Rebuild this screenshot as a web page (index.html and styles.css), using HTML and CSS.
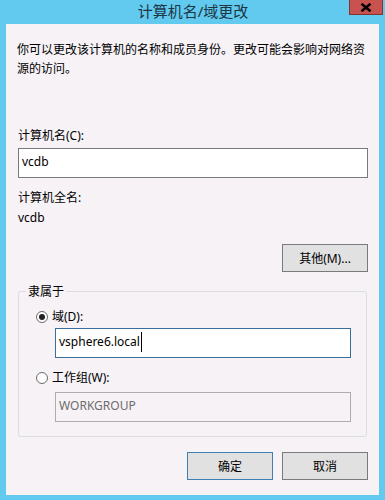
FILE: index.html
```html
<!DOCTYPE html>
<html>
<head>
<meta charset="utf-8">
<link rel="stylesheet" href="styles.css">
</head>
<body>
<div class="window">
  <div class="titlebar">
    <div class="title">计算机名/域更改</div>
    <div class="close"><svg width="12" height="9" viewBox="0 0 12 9"><path d="M1.5 0.8 L10.5 8.2 M10.5 0.8 L1.5 8.2" stroke="#000" stroke-width="2.6" fill="none"/></svg></div>
  </div>
  <div class="panel">
    <p class="desc">你可以更改该计算机的名称和成员身份。更改可能会影响对网络资源的访问。</p>
    <div class="label first">计算机名(C):</div>
    <div class="field">vcdb</div>
    <div class="label full">计算机全名:</div>
    <div class="label value">vcdb</div>
    <div class="row-right more-row"><div class="btn">其他(M)...</div></div>
    <fieldset class="group">
      <legend>隶属于</legend>
      <div class="radio-row domain-row"><span class="radio checked"></span><span>域(D):</span></div>
      <div class="field sub focus">vsphere6.local<span class="caret"></span></div>
      <div class="radio-row wg-row"><span class="radio"></span><span>工作组(W):</span></div>
      <div class="field sub disabled">WORKGROUP</div>
    </fieldset>
    <div class="row-right actions">
      <div class="btn default">确定</div>
      <div class="btn">取消</div>
    </div>
  </div>
</div>
</body>
</html>
```
FILE: styles.css
```css
html, body {
  margin: 0;
  padding: 0;
}
body {
  background: #62c9ef;
  font-family: "Noto Sans", "Noto Sans CJK SC", sans-serif;
  font-size: 12px;
  color: #000;
  width: 385px;
  height: 500px;
  overflow: hidden;
}
.window {
  display: flex;
  flex-direction: column;
  height: 500px;
}
.titlebar {
  position: relative;
  height: 24px;
  display: flex;
  justify-content: center;
}
.title {
  font-size: 15px;
  line-height: 22px;
  color: #1c3644;
  padding-left: 1px;
}
.close {
  position: absolute;
  left: 349px;
  top: 0;
  width: 32px;
  height: 14px;
  background: #c8524e;
  border: 1px solid #7d3633;
  border-top: none;
  display: flex;
  align-items: center;
  justify-content: center;
}
.panel {
  margin: 0 6px 5px 6px;
  height: 471px;
  background: #f6f2f6;
  padding: 0 11px 0 12px;
  box-sizing: border-box;
  display: flex;
  flex-direction: column;
}
.desc {
  margin: 16px 0 0 -1px;
  line-height: 19px;
}
.label {
  line-height: 19px;
}
.label.first {
  margin-top: 48px;
}
.label.full {
  margin-top: 10px;
}
.label.value {
  margin-top: 1px;
}
.field {
  margin-top: 3px;
  height: 30px;
  box-sizing: border-box;
  border: 1px solid #7a7a7a;
  background: #fff;
  padding: 0 3px;
  display: flex;
  align-items: center;
  line-height: 19px;
  padding-bottom: 3px;
}
.row-right {
  display: flex;
  justify-content: flex-end;
  gap: 9px;
}
.more-row {
  margin-top: 17px;
}
.btn {
  width: 86px;
  height: 28px;
  box-sizing: border-box;
  border: 1px solid #7a7a7a;
  background: #e1e1e1;
  display: flex;
  align-items: center;
  justify-content: center;
  line-height: 19px;
}
.btn.default {
  border-color: #3c7fb1;
}
.group {
  margin: 10px 1px 0 0;
  padding: 0 0 14px 0;
  border: 1px solid #dadde2;
  border-radius: 3px;
}
.group legend {
  margin-left: 7px;
  padding: 0 2px;
  line-height: 19px;
}
.radio-row {
  display: flex;
  align-items: center;
  gap: 4px;
  line-height: 19px;
  padding-left: 17px;
}
.domain-row {
  margin-top: 6px;
}
.wg-row {
  margin-top: 10px;
}
.radio {
  width: 12px;
  height: 12px;
  box-sizing: border-box;
  border: 1px solid #6b6b6b;
  border-radius: 50%;
  background: #fff;
  display: flex;
  align-items: center;
  justify-content: center;
}
.radio.checked::after {
  content: "";
  width: 6px;
  height: 6px;
  border-radius: 50%;
  background: #222;
}
.field.sub {
  margin-left: 36px;
  width: 296px;
}
.field.focus {
  margin-top: 2px;
  border-color: #3a6f9c;
}
.field.disabled {
  margin-top: 5px;
  border-color: #adadad;
  background: #f6f2f6;
  color: #6d6d6d;
}
.caret {
  display: inline-block;
  width: 1px;
  height: 20px;
  background: #000;
  margin-left: 1px;
}
.actions {
  margin-top: 15px;
}
```
